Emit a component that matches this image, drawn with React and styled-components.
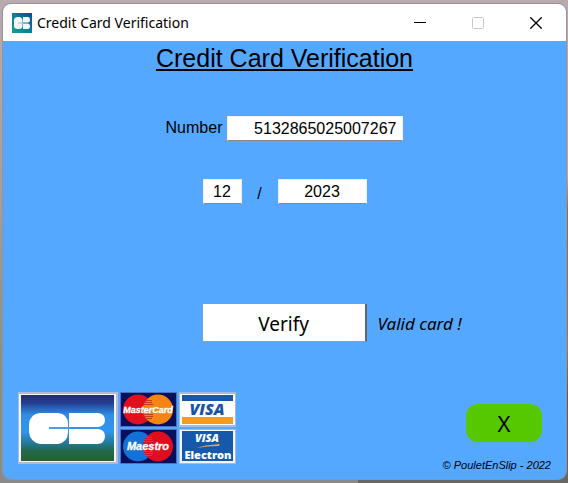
import React, { useState } from "react";
import styled, { createGlobalStyle } from "styled-components";

const GlobalStyle = createGlobalStyle`
  * { box-sizing: border-box; }
  body { margin: 0; }
`;

const Desktop = styled.div`
  display: flex;
  min-height: 100vh;
  padding: 3px 1px 3px 2px;
  color: #000;
  font-family: "Liberation Sans", Arial, sans-serif;
  background:
    linear-gradient(#b9abad 36%, #7d7263 44%, #8a7f6b 72%, #5e5c58 82%, #686765) right / 37% 100% no-repeat,
    linear-gradient(#b9abad, #a39b9e 45%, #8c8c8c 75%, #8a8a8a);
`;

const Window = styled.main`
  flex: 1;
  display: flex;
  flex-direction: column;
  overflow: hidden;
  border: 1px solid #979296;
  border-radius: 9px;
  background: #55a8ff;
`;

const TitleBar = styled.header`
  display: flex;
  align-items: center;
  height: 37px;
  padding: 0 1px 0 9px;
  background: #fff;
  font-family: "Segoe UI", "Noto Sans", sans-serif;
  font-size: 14px;
`;

const WindowTitle = styled.span`
  flex: 1;
  padding: 0 0 1px 5px;
`;

const CaptionButton = styled.button`
  display: grid;
  place-items: center;
  width: 58px;
  height: 37px;
  padding: 0;
  border: 0;
  background: transparent;
`;

const Body = styled.div`
  flex: 1;
  display: flex;
  flex-direction: column;
`;

const Heading = styled.h1`
  margin: 0;
  text-align: center;
  font-size: 25px;
  font-weight: 400;
  line-height: 34px;
  text-decoration: underline;
  text-decoration-thickness: 2px;
  text-underline-offset: 2px;
  text-decoration-skip-ink: none;
`;

const Form = styled.form`
  display: flex;
  flex-direction: column;
  padding-top: 41px;
`;

const Row = styled.div`
  display: flex;
  justify-content: center;
  align-items: center;
  gap: ${(p) => p.$gap}px;
  margin-bottom: ${(p) => p.$after}px;
  font-size: 16px;
`;

const Label = styled.label`
  padding-bottom: 2px;
`;

const Slash = styled.span`
  width: 6px;
  padding-top: 4px;
  text-align: center;
`;

const Field = styled.input`
  width: ${(p) => p.$width}px;
  height: 25px;
  padding: 0 ${(p) => (p.$align === "right" ? 6 : 0)}px;
  border: 1px solid #f0f0f0;
  border-bottom-color: #8a8a8a;
  background: #fff;
  color: #000;
  font: 16px "Liberation Sans", Arial, sans-serif;
  text-align: ${(p) => p.$align};
`;

const SubmitRow = styled.div`
  display: grid;
  grid-template-columns: 1fr 164px 1fr;
  align-items: center;
  column-gap: 11px;
`;

const VerifyButton = styled.button`
  grid-column: 2;
  height: 38px;
  padding: 2px 0 0;
  border: 0 solid #fff;
  border-right: 2px solid #666;
  border-bottom: 1px solid #a0a0a0;
  background: #fff;
  color: #000;
  font: 19px "Segoe UI", "Noto Sans", sans-serif;
`;

const Result = styled.output`
  font: italic 17px "Comic Sans MS", "Noto Sans", cursive;
  white-space: nowrap;
`;

const Footer = styled.footer`
  display: flex;
  justify-content: space-between;
  margin-top: auto;
  padding: 20px 15px 7px 15px;
`;

const Brands = styled.div`
  display: flex;
  align-items: flex-start;
  gap: 2px;
`;

const BrandGrid = styled.div`
  display: grid;
  grid-template-columns: 57px 57px;
  gap: 2px;
`;

const Drawing = styled.svg`
  display: block;
`;

const Closing = styled.div`
  display: flex;
  flex-direction: column;
  align-items: flex-end;
  padding-top: 12px;
`;

const QuitButton = styled.button`
  width: 76px;
  height: 38px;
  margin-right: 9px;
  padding: 0;
  border: 0;
  border-radius: 12px;
  background: #55c800;
  color: #000;
  font: 22px "Segoe UI", "Noto Sans", sans-serif;
`;

const Copyright = styled.small`
  padding-top: 17px;
  font-size: 11px;
  font-style: italic;
  line-height: 13px;
`;

function CbIcon() {
  return (
    <Drawing width="20" height="20" viewBox="0 0 20 20" aria-hidden="true">
      <defs>
        <linearGradient id="cbIcon" x1="1" y1="0" x2="0" y2="1">
          <stop offset="0" stopColor="#064c96" />
          <stop offset="0.5" stopColor="#087f9c" />
          <stop offset="1" stopColor="#17a093" />
        </linearGradient>
      </defs>
      <path fill="url(#cbIcon)" d="M0 0H20V20H0Z" />
      <rect x="2" y="4" width="8.5" height="12" rx="3.5" fill="#f3fafa" />
      <path fill="#f3fafa" d="M11 4H16Q18 4 18 7Q18 9.6 16 9.6H11ZM11 10.4H16Q18 10.4 18 13Q18 16 16 16H11Z" />
      <path fill="#8fc4cf" d="M6 9.5H11V10.5H6Z" />
    </Drawing>
  );
}

function CbCard() {
  return (
    <Drawing width="100" height="72" viewBox="0 0 100 72" role="img" aria-label="CB">
      <defs>
        <linearGradient id="cbCard" x1="0" y1="0" x2="0" y2="1">
          <stop offset="0" stopColor="#222b78" />
          <stop offset="0.12" stopColor="#243f91" />
          <stop offset="0.3" stopColor="#2f8ee5" />
          <stop offset="0.55" stopColor="#3196ed" />
          <stop offset="0.72" stopColor="#24799e" />
          <stop offset="0.85" stopColor="#236748" />
          <stop offset="1" stopColor="#25632d" />
        </linearGradient>
      </defs>
      <path fill="#b6b9d6" d="M0 0H100V72H0Z" />
      <path fill="#f4f4f4" d="M1 2H98V70H1Z" />
      <path fill="url(#cbCard)" d="M3 3H96V69H3Z" />
      <path
        fill="#fff"
        d="M22 21H40Q50 22 50 32V40Q50 50 40 52H22Q12 50 11 40V32Q12 22 22 21Z"
      />
      <path fill="#fff" d="M51 21H80Q87 22 87 28Q87 34 80 35H51ZM51 37H80Q87 38 87 44Q87 51 80 52H51Z" />
      <path fill="#4a9ff0" d="M31 35H51V37H31Z" />
    </Drawing>
  );
}

function CirclesCard({ name, left, right, blend, textSize }) {
  return (
    <Drawing width="57" height="35" viewBox="0 0 57 35" role="img" aria-label={name}>
      <path fill="#4d72c4" d="M0 0H57V35H0Z" />
      <path fill="#08105c" d="M1 1H56V34H1Z" />
      <circle cx="18" cy="17.5" r="15" fill={left} />
      <circle cx="38" cy="17.5" r="15" fill={right} />
      <path
        stroke={blend}
        strokeWidth="1"
        d="M26 8.5H32M25 10.5H32M24 12.5H33M23 22.5H33M24 24.5H33M25 26.5H32"
      />
      <text
        x="28"
        y="21"
        fill="#fff"
        stroke="#fff"
        strokeWidth="0.3"
        textAnchor="middle"
        fontFamily="Liberation Sans, Arial, sans-serif"
        fontSize={textSize}
        fontWeight="700"
        fontStyle="italic"
      >
        {name}
      </text>
    </Drawing>
  );
}

function VisaCard() {
  return (
    <Drawing width="57" height="35" viewBox="0 0 57 35" role="img" aria-label="VISA">
      <path fill="#a9b9dd" d="M0 0H57V35H0Z" />
      <path fill="#fff" d="M1 2H56V33H1Z" />
      <path fill="#1559ab" d="M3 3H54V9H3Z" />
      <path fill="#f59a23" d="M3 25H54V32H3Z" />
      <text
        x="28"
        y="23"
        fill="#1a55a5"
        textAnchor="middle"
        fontFamily="Open Sans, sans-serif"
        fontSize="16"
        fontWeight="800"
        fontStyle="italic"
      >
        VISA
      </text>
    </Drawing>
  );
}

function VisaElectronCard() {
  return (
    <Drawing width="57" height="35" viewBox="0 0 57 35" role="img" aria-label="VISA Electron">
      <path fill="#a9b9dd" d="M0 0H57V35H0Z" />
      <path fill="#f2f5fb" d="M1 1H56V34H1Z" />
      <path fill="#1559ab" d="M3 2H54V32H3Z" />
      <g fill="#fff" textAnchor="middle" fontFamily="Open Sans, sans-serif">
        <text x="28" y="13" fontSize="11" fontWeight="800" fontStyle="italic">
          VISA
        </text>
        <text x="29" y="30" fontSize="11" fontWeight="800">
          Electron
        </text>
      </g>
      <path fill="#e7a05a" d="M18 19Q24 16 41 15L40 17Q27 17 18 19Z" />
    </Drawing>
  );
}

export default function App() {
  const [number, setNumber] = useState("5132865025007267");
  const [month, setMonth] = useState("12");
  const [year, setYear] = useState("2023");

  return (
    <>
      <GlobalStyle />
      <Desktop>
        <Window>
          <TitleBar>
            <CbIcon />
            <WindowTitle>Credit Card Verification</WindowTitle>
            <CaptionButton type="button" aria-label="Minimize">
              <Drawing width="12" height="12" viewBox="0 0 12 12">
                <path stroke="#000" d="M0 5.5H12" />
              </Drawing>
            </CaptionButton>
            <CaptionButton type="button" aria-label="Maximize" disabled>
              <Drawing width="12" height="12" viewBox="0 0 12 12">
                <rect x="0.5" y="0.5" width="11" height="11" rx="1" fill="none" stroke="#c8c8c8" />
              </Drawing>
            </CaptionButton>
            <CaptionButton type="button" aria-label="Close">
              <Drawing width="12" height="12" viewBox="0 0 12 12">
                <path stroke="#000" strokeWidth="1.3" d="M0.3 0.3L11.7 11.7M11.7 0.3L0.3 11.7" />
              </Drawing>
            </CaptionButton>
          </TitleBar>
          <Body>
            <Heading>Credit Card Verification</Heading>
            <Form onSubmit={(e) => e.preventDefault()}>
              <Row $gap={5} $after={38}>
                <Label htmlFor="number">Number</Label>
                <Field
                  id="number"
                  $width={176}
                  $align="right"
                  value={number}
                  onChange={(e) => setNumber(e.target.value)}
                />
              </Row>
              <Row $gap={15} $after={100}>
                <Field
                  aria-label="Expiry month"
                  $width={39}
                  $align="center"
                  value={month}
                  onChange={(e) => setMonth(e.target.value)}
                />
                <Slash>/</Slash>
                <Field
                  aria-label="Expiry year"
                  $width={89}
                  $align="center"
                  value={year}
                  onChange={(e) => setYear(e.target.value)}
                />
              </Row>
              <SubmitRow>
                <VerifyButton type="submit">Verify</VerifyButton>
                <Result htmlFor="number">Valid card !</Result>
              </SubmitRow>
            </Form>
            <Footer>
              <Brands>
                <CbCard />
                <BrandGrid>
                  <CirclesCard name="MasterCard" left="#e2101c" right="#f58412" blend="#c43a22" textSize="9" />
                  <VisaCard />
                  <CirclesCard name="Maestro" left="#1272d8" right="#e00d20" blend="#8a4a9c" textSize="11" />
                  <VisaElectronCard />
                </BrandGrid>
              </Brands>
              <Closing>
                <QuitButton type="button">X</QuitButton>
                <Copyright>© PouletEnSlip - 2022</Copyright>
              </Closing>
            </Footer>
          </Body>
        </Window>
      </Desktop>
    </>
  );
}
